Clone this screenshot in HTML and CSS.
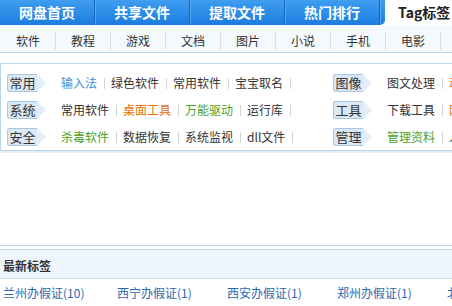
FILE: index.html
```html
<!doctype html>
<html>
<head>
<meta charset="utf-8">
<title>Tag标签</title>
<link rel="stylesheet" href="styles.css">
</head>
<body>
<div class="page">
  <div class="topnav">
    <ul class="tabs">
      <li><a href="#">网盘首页</a></li>
      <li><a href="#">共享文件</a></li>
      <li><a href="#">提取文件</a></li>
      <li><a href="#">热门排行</a></li>
    </ul>
    <a class="tab-on" href="#">Tag标签</a>
  </div>
  <ul class="subnav">
    <li>软件</li>
    <li>教程</li>
    <li>游戏</li>
    <li>文档</li>
    <li>图片</li>
    <li>小说</li>
    <li>手机</li>
    <li>电影</li>
  </ul>

  <div class="tagbox">
    <div class="tagcol">
      <div class="tagrow"><span class="badge">常用</span><a href="#" class="blue">输入法</a><a href="#">绿色软件</a><a href="#">常用软件</a><a href="#">宝宝取名</a></div>
      <div class="tagrow"><span class="badge">系统</span><a href="#">常用软件</a><a href="#" class="orange">桌面工具</a><a href="#" class="green">万能驱动</a><a href="#">运行库</a></div>
      <div class="tagrow"><span class="badge">安全</span><a href="#" class="green">杀毒软件</a><a href="#">数据恢复</a><a href="#">系统监视</a><a href="#">dll文件</a></div>
    </div>
    <div class="tagcol">
      <div class="tagrow"><span class="badge">图像</span><a href="#">图文处理</a><a href="#" class="orange">动画制作</a><a href="#">图标设计</a></div>
      <div class="tagrow"><span class="badge">工具</span><a href="#">下载工具</a><a href="#" class="orange">网络工具</a><a href="#">压缩解压</a></div>
      <div class="tagrow"><span class="badge">管理</span><a href="#" class="green">管理资料</a><a href="#">人事管理</a><a href="#">财务软件</a></div>
    </div>
  </div>

  <div class="newest">
    <h3>最新标签</h3>
    <div class="newlist">
      <a href="#">兰州办假证(10)</a>
      <a href="#">西宁办假证(1)</a>
      <a href="#">西安办假证(1)</a>
      <a href="#">郑州办假证(1)</a>
      <a href="#">北京办假证(1)</a>
    </div>
  </div>
</div>
</body>
</html>
```

FILE: styles.css
```css
html, body {
	margin: 0;
	overflow: hidden;
	background: #fff;
}
body {
	font: 12px "Noto Sans CJK SC", "Liberation Sans", sans-serif;
	color: #333;
}
a {
	text-decoration: none;
	color: #333;
}
.page {
	width: 960px;
}
/* top blue tabs */
.topnav {
	display: flex;
	height: 25px;
}
.tabs {
	display: flex;
	margin: 0;
	padding: 0;
	list-style: none;
	width: 385px;
	background: linear-gradient(#3f9ef0, #1b7ce0);
	border-bottom-right-radius: 5px;
}
.tabs li {
	width: 94px;
	border-right: 1px solid #1464bd;
	box-shadow: 1px 0 0 #58a9ee;
	text-align: center;
	line-height: 25px;
}
.tabs a {
	color: #fff;
	font-size: 14px;
	font-weight: bold;
}
.tab-on {
	padding-left: 13px;
	line-height: 25px;
	font-size: 14px;
	font-weight: bold;
	color: #222;
}
/* sub nav */
.subnav {
	display: flex;
	margin: 0;
	padding: 0 0 0 1px;
	list-style: none;
	height: 27px;
	background: #f4f9fe;
	border-bottom: 1px solid #bad6ee;
}
.subnav li {
	width: 54px;
	height: 18px;
	line-height: 18px;
	margin-top: 7px;
	border-right: 1px solid #d3e2ef;
	text-align: center;
}
/* tag box */
.tagbox {
	display: flex;
	margin-top: 10px;
	padding: 5px 0 0 6px;
	border: 1px solid #b8d5ec;
	border-right: none;
	box-shadow: 0 2px 0 #e3eef8;
}
.tagcol {
	width: 326px;
}
.tagrow {
	display: flex;
	align-items: center;
	height: 27px;
	white-space: nowrap;
}
.badge {
	position: relative;
	width: 29px;
	height: 16px;
	line-height: 16px;
	border: 1px solid #a9c8e5;
	border-right: none;
	border-radius: 3px 0 0 3px;
	background: #dbe9f7;
	text-align: center;
	font-size: 13px;
	margin-right: 24px;
}
.badge::after {
	content: "";
	position: absolute;
	right: -9px;
	top: -1px;
	border-left: 9px solid #e4eef9;
	border-top: 9px solid transparent;
	border-bottom: 9px solid transparent;
}
.tagrow a::after {
	content: "";
	display: inline-block;
	width: 1px;
	height: 11px;
	margin: 0 6px 0 7px;
	background: #d4d4d4;
	vertical-align: -1px;
}
.blue { color: #3a8fd8; }
.green { color: #4f9f27; }
.orange { color: #e8700e; }
/* newest tags */
.newest {
	margin-top: 94px;
	border-top: 1px solid #b8d5ec;
	padding-top: 3px;
}
.newest h3 {
	margin: 0;
	height: 28px;
	line-height: 32px;
	padding-left: 3px;
	font-size: 12px;
	color: #333;
	background: #eef5fc;
	border-top: 1px solid #b8d5ec;
	border-bottom: 1px solid #cfe2f2;
}
.newlist {
	display: flex;
	padding-left: 3px;
	line-height: 28px;
	white-space: nowrap;
}
.newlist a {
	width: 110px;
	flex: none;
	color: #2a67b3;
}
.newlist a:first-child {
	width: 114px;
}
```
